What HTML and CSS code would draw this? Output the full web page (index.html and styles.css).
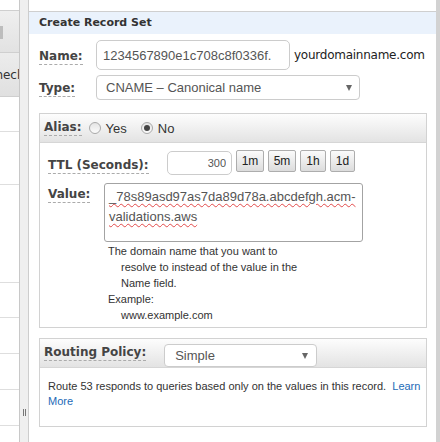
FILE: index.html
```html
<!DOCTYPE html>
<html>
<head>
    <meta charset="utf-8">
    <title>Create Record Set</title>
<link rel="stylesheet" href="styles.css">
</head>
<body>
    <div class="page">
        <div class="sidebar">
            <div class="side-top"></div>
            <div class="side-row side-btn-row"><span class="side-btn"></span></div>
            <div class="side-row side-title-row"><span class="side-title">Check</span></div>
            <div class="side-row r34"></div>
            <div class="side-row r52"></div>
            <div class="side-row r97"></div>
            <div class="side-row r34"></div>
            <div class="side-row r35"></div>
            <div class="side-row r35"></div>
            <div class="side-row r35"></div>
        </div>
        <div class="splitter"><span class="grip"></span></div>

        <div class="main">
            <div class="panel-title">Create Record Set</div>
            <div class="panel-body">
                <div class="row name-row">
                    <span class="lbl-cell"><span class="lbl">Name:</span></span>
                    <input class="text-input name-input" type="text" value="1234567890e1c708c8f0336f.">
                    <span class="domain">yourdomainname.com</span>
                </div>
                <div class="row type-row">
                    <span class="lbl-cell"><span class="lbl">Type:</span></span>
                    <div class="select type-select">CNAME &ndash; Canonical name<span class="arrow"></span></div>
                </div>

                <div class="box">
                    <div class="box-head">
                        <span class="lbl">Alias:</span>
                        <span class="radio"></span><span class="radio-text">Yes</span>
                        <span class="radio checked"></span><span class="radio-text">No</span>
                    </div>
                    <div class="box-body alias-body">
                        <div class="ttl-row">
                            <span class="ttl-lbl"><span class="lbl">TTL (Seconds):</span></span>
                            <input class="text-input ttl-input" type="text" value="300">
                            <button class="btn b1m">1m</button>
                            <button class="btn b5m">5m</button>
                            <button class="btn b1h">1h</button>
                            <button class="btn b1d">1d</button>
                        </div>
                        <div class="value-row">
                            <span class="value-lbl"><span class="lbl">Value:</span></span>
                            <div class="value-field">
                                <div class="textarea"><span class="misspelled">_78s89asd97as7da89d78a.abcdefgh.acm-</span><br><span class="misspelled">validations.aws</span></div>
                                <p class="help">The domain name that you want to resolve to instead of the value in the Name field.</p>
                                <p class="help">Example:<br>www.example.com</p>
                            </div>
                        </div>
                    </div>
                </div>

                <div class="box routing-box">
                    <div class="box-head">
                        <span class="lbl">Routing Policy:</span>
                        <div class="select routing-select">Simple<span class="arrow"></span></div>
                    </div>
                    <div class="box-body routing-body">
                        Route 53 responds to queries based only on the values in this record.&nbsp; <a href="#">Learn More</a>
                    </div>
                </div>
            </div>
        </div>
        <div class="scrollbar"></div>
    </div>
</body>
</html>
```

FILE: styles.css
```css
*{
    margin: 0;
    padding: 0;
    box-sizing: border-box;
}
body{
    background: #fff;
    font-family: "Liberation Sans", Arial, sans-serif;
    color: #333;
}
.page{
    display: flex;
    width: 440px;
    height: 442px;
    overflow: hidden;
}

/* left list, mostly hidden */
.sidebar{
    width: 20px;
    border-right: 1px solid #c8c8c8;
    overflow: hidden;
    flex-shrink: 0;
}
.side-top{
    height: 11px;
    border-bottom: 1px solid #cfcfcf;
}
.side-row{
    border-bottom: 1px solid #dedede;
}
.side-btn-row{
    height: 42px;
    background: linear-gradient(#efefef, #e2e2e2);
    border-bottom-color: #cfcfcf;
    padding-top: 15px;
}
.side-btn{
    display: block;
    width: 3px;
    height: 13px;
    background: #bdbdbd;
}
.side-title-row{
    height: 44px;
    background: linear-gradient(#ececec, #e0e0e0);
    border-bottom-color: #cfcfcf;
    display: flex;
    align-items: center;
}
.side-title{
    margin-left: -13px;
    font-family: "DejaVu Sans", Verdana, sans-serif;
    font-size: 12px;
    color: #333;
    white-space: nowrap;
}
.r34{height: 35px;}
.r35{height: 36px;}
.r52{height: 53px;}
.r97{height: 98px;}

.splitter{
    width: 9px;
    background: #efefef;
    border-right: 1px solid #cdcdcd;
    flex-shrink: 0;
    display: flex;
    flex-direction: column;
    align-items: center;
}
.grip{
    margin-top: 409px;
    width: 3px;
    height: 7px;
    border-left: 1px solid #777;
    border-right: 1px solid #777;
}

.scrollbar{
    width: 4px;
    background: #d2d2d2;
    flex-shrink: 0;
}

/* main panel */
.main{
    flex: 1;
    padding-top: 11px;
    background: #fff;
}
.panel-title{
    height: 23px;
    border-top: 1px solid #cfcfcf;
    background: #eaf2fc;
    padding-left: 10px;
    font-family: "DejaVu Sans", Verdana, sans-serif;
    font-weight: bold;
    font-size: 11px;
    line-height: 22px;
    color: #333;
}
.panel-body{
    padding: 0 9px 0 10px;
}
.row{
    display: flex;
    align-items: center;
}
.lbl-cell{
    width: 57px;
    flex-shrink: 0;
}
.lbl{
    display: inline-block;
    font-family: "DejaVu Sans", Verdana, sans-serif;
    font-weight: bold;
    font-size: 12px;
    line-height: 15px;
    color: #444;
    border-bottom: 1px dashed #ababab;
}
.name-row{
    margin-top: 6px;
    height: 30px;
}
.text-input{
    font-family: "Liberation Sans", Arial, sans-serif;
    color: #555;
    border: 1px solid #ccc;
    border-radius: 5px;
    outline: none;
    background: #fff;
}
.name-input{
    width: 194px;
    height: 30px;
    padding: 0 6px;
    font-size: 13px;
}
.domain{
    margin-left: 4px;
    font-family: "DejaVu Sans", Verdana, sans-serif;
    font-size: 12px;
    letter-spacing: -0.25px;
    color: #222;
    white-space: nowrap;
}
.type-row{
    margin-top: 5px;
    height: 25px;
}
.select{
    display: flex;
    align-items: center;
    justify-content: space-between;
    border: 1px solid #ccc;
    border-radius: 4px;
    background: #fff;
    font-size: 13px;
    color: #555;
    padding: 0 7px 0 9px;
}
.type-select{
    width: 264px;
    height: 25px;
}
.arrow{
    width: 0;
    height: 0;
    border-left: 3px solid transparent;
    border-right: 3px solid transparent;
    border-top: 6px solid #666;
}

/* alias / routing boxes */
.box{
    margin-top: 13px;
    border: 1px solid #d2d2d2;
}
.box-head{
    display: flex;
    align-items: center;
    height: 29px;
    padding-left: 4px;
    background: linear-gradient(#fdfdfd, #e3e3e3);
    border-bottom: 1px solid #d6d6d6;
}
.radio{
    width: 12px;
    height: 12px;
    border: 1px solid #a9a9a9;
    border-radius: 50%;
    background: linear-gradient(#e4e4e4, #fbfbfb);
    display: flex;
    align-items: center;
    justify-content: center;
    margin-left: 7px;
}
.radio + .radio-text + .radio{
    margin-left: 14px;
}
.radio.checked::after{
    content: "";
    width: 6px;
    height: 6px;
    border-radius: 50%;
    background: #444;
}
.radio-text{
    margin-left: 5px;
    font-size: 13px;
    color: #333;
}
.alias-body{
    padding: 7px 8px 4px 8px;
}
.ttl-row{
    display: flex;
    align-items: flex-start;
}
.ttl-lbl{
    width: 119px;
    flex-shrink: 0;
    padding-top: 5px;
}
.ttl-input{
    width: 65px;
    height: 24px;
    margin-top: 1px;
    padding-right: 5px;
    text-align: right;
    font-size: 11px;
}
.btn{
    height: 22px;
    margin-left: 4px;
    border: 1px solid #adadad;
    border-radius: 2px;
    background: linear-gradient(#fbfbfb, #dcdcdc);
    font-family: "Liberation Sans", Arial, sans-serif;
    font-size: 12px;
    color: #222;
}
.b1m, .b5m{width: 28px;}
.b1h{width: 26px;}
.b1d{width: 25px;}
.value-row{
    display: flex;
    margin-top: 8px;
}
.value-lbl{
    width: 56px;
    flex-shrink: 0;
    padding-top: 1px;
}
.textarea{
    width: 259px;
    height: 59px;
    border: 1px solid #a3a3a3;
    border-radius: 3px;
    padding: 3px 4px;
    font-size: 13px;
    line-height: 20px;
    color: #555;
}
.misspelled{
    text-decoration: underline wavy #e24a4a;
    text-decoration-thickness: 1px;
    text-underline-offset: 2px;
}
.help{
    width: 206px;
    padding-left: 17px;
    text-indent: -13px;
    font-size: 11px;
    line-height: 16px;
    color: #333;
}
.value-field .textarea + .help{
    margin-top: 1px;
}
.routing-box{
    margin-top: 10px;
}
.routing-select{
    align-self: flex-end;
    width: 153px;
    height: 23px;
    margin-left: 18px;
    padding-left: 10px;
    padding-right: 8px;
}
.routing-body{
    padding: 11px 4px 17px 8px;
    font-size: 11px;
    line-height: 15px;
    color: #333;
}
.routing-body a{
    color: #1d6bb7;
    text-decoration: none;
}
```
